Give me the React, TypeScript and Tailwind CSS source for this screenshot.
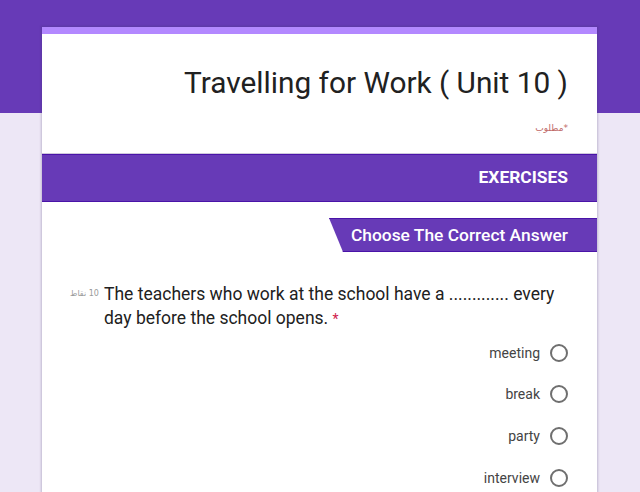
const OPTIONS = ["meeting", "break", "party", "interview"];

function RadioRow({ label }: { label: string }) {
  return (
    <div className="flex h-[41.67px] items-center justify-end gap-[10px]">
      <span className="text-[14px] leading-5 text-[#444444]">{label}</span>
      <span className="h-[18px] w-[18px] rounded-full border-2 border-[#6f6f6f]" />
    </div>
  );
}

export default function App() {
  return (
    <div className="relative h-[492px] w-[640px] overflow-hidden bg-[#ede7f6] font-['Roboto',sans-serif]">
      {/* Purple band behind the form */}
      <div className="absolute inset-x-0 top-0 h-[113px] bg-[#673ab7]" />

      <div className="relative mx-[42px] mt-[27px] h-[465px] w-[555px] bg-white shadow-[0_0_2px_1px_rgba(60,50,100,0.25)]">
        <div className="h-[7px] bg-[#b388ff]" />

        {/* Title */}
        <div className="flex h-[120px] flex-col items-end pr-[29px]">
          <h1 className="mt-[31px] text-[29.8px] leading-[36px] font-normal text-[#212121]">
            Travelling for Work ( Unit 10 )
          </h1>
          <div
            dir="rtl"
            className="mt-[20px] font-['DejaVu_Sans',sans-serif] text-[9px] leading-[14px] text-[#c06a68]"
          >
            *مطلوب
          </div>
        </div>

        {/* Section header */}
        <div className="flex h-[48px] items-center justify-end border-y border-[#4a14a8] bg-[#673ab7] pr-[29px] pb-px shadow-[0_-1px_0_#cfc8dc]">
          <span className="text-[17.4px] font-bold text-white">EXERCISES</span>
        </div>

        {/* Sub heading tag */}
        <div className="mt-[16px] flex justify-end">
          <div className="flex h-[34px] w-[268px] items-center justify-end border-y border-[#4a14a8] bg-[#673ab7] pt-px pr-[29px] [clip-path:polygon(0_0,100%_0,100%_100%,14px_100%)]">
            <span className="text-[17.4px] font-medium text-white">Choose The Correct Answer</span>
          </div>
        </div>

        {/* Question */}
        <div className="mt-[30px] flex items-start pl-[28px] pr-[29px]">
          <span
            dir="rtl"
            className="mt-[6px] w-[31px] shrink-0 text-left font-['DejaVu_Sans',sans-serif] text-[8px] leading-[12px] whitespace-nowrap text-[#9a9a9a]"
          >
            10 نقاط
          </span>
          <p className="ml-[3px] text-[17.5px] leading-[24px] text-[#212121]">
            The teachers who work at the school have a ............. every day before the school opens.{" "}
            <span className="text-[14px] leading-none text-[#d0204a]">*</span>
          </p>
        </div>

        {/* Answers */}
        <div className="mt-[2px] pr-[29px]">
          {OPTIONS.map((option) => (
            <RadioRow key={option} label={option} />
          ))}
        </div>
      </div>
    </div>
  );
}
